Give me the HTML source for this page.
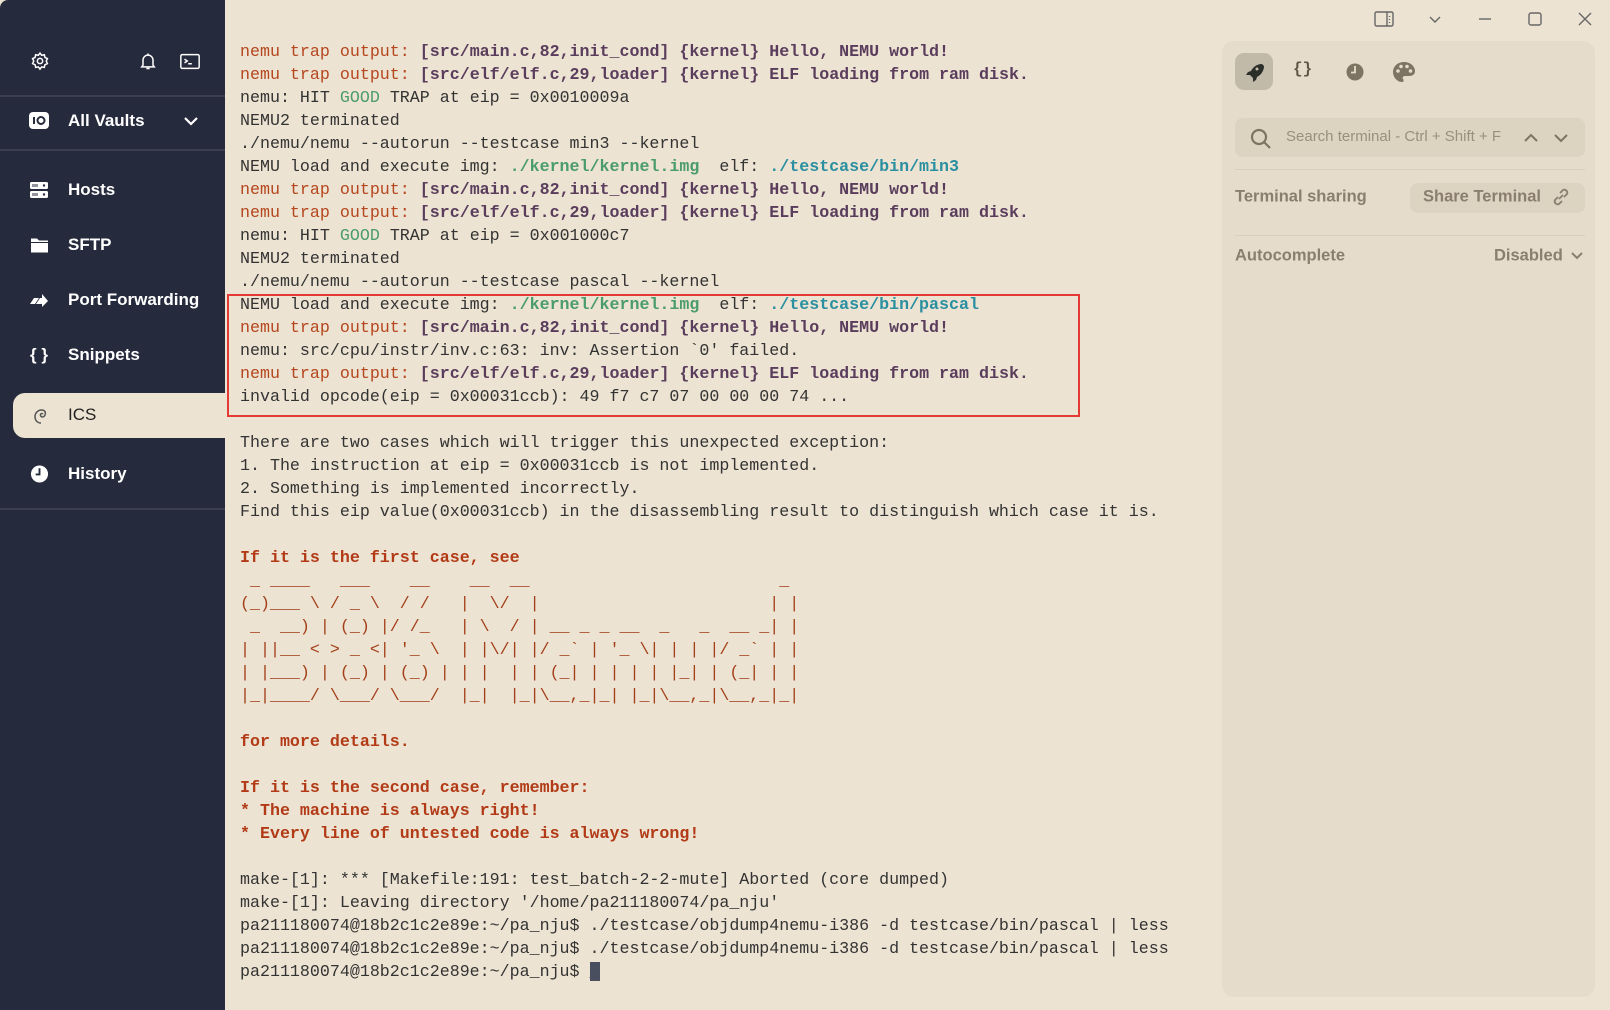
<!DOCTYPE html>
<html><head><meta charset="utf-8"><style>
*{margin:0;padding:0;box-sizing:border-box}
body{width:1610px;height:1010px;background:#ece3d2;position:relative;overflow:hidden;font-family:"Liberation Sans",sans-serif}
#side{position:absolute;left:0;top:0;width:225px;height:1010px;background:#262a3d;border-top-left-radius:8px}
.hr{position:absolute;left:0;width:225px;height:2px;background:#3a3e50}
.it{position:absolute;left:68px;color:#fff;font-size:17px;font-weight:bold;transform:translateY(-50%)}
.ic{position:absolute;left:29px;width:22px;height:22px;transform:translateY(-50%)}
#pill{position:absolute;left:13px;top:393px;width:215px;height:45px;background:#ece3d2;border-radius:12px 0 0 12px}
pre{position:absolute;left:240px;top:40px;font-family:"Liberation Mono",monospace;font-size:16.65px;line-height:23px;color:#333}
.o{color:#b5461e}.p{color:#5a3d5c;font-weight:bold}.g{color:#4b9c6d}.gb{color:#4b9c6d;font-weight:bold}.t{color:#2a8fa0;font-weight:bold}.r{color:#b23a16;font-weight:bold}.a{color:#a3401a}
#box{position:absolute;left:227px;top:294px;width:853px;height:123px;border:2px solid #e53935}
#panel{position:absolute;left:1222px;top:41px;width:373px;height:956px;background:#e6dccb;border-radius:12px}
.pt{position:absolute;color:#8a7f6f;font-size:16.5px;font-weight:bold;transform:translateY(-50%)}
.ln{position:absolute;left:13px;width:350px;height:1px;background:#d8cfbe}
.wc{position:absolute;top:9px;width:20px;height:20px}
</style></head><body>
<div id="side">
<svg class="ic" style="top:61px;left:30px;width:20px;height:20px" viewBox="0 0 24 24" fill="none" stroke="#fff" stroke-width="1.8"><circle cx="12" cy="12" r="3.2"/><path d="M12 2.5l2 2.6 3.2-.6.7 3.2 3 1.4-1.4 3 1.4 3-3 1.4-.7 3.2-3.2-.6-2 2.6-2-2.6-3.2.6-.7-3.2-3-1.4 1.4-3-1.4-3 3-1.4.7-3.2 3.2.6z"/></svg>
<svg class="ic" style="top:61px;left:138px;width:20px" viewBox="0 0 24 24" fill="none" stroke="#fff" stroke-width="1.8"><path d="M6 17V11a6 6 0 0112 0v6l1.5 2h-15zM10 21h4M12 3v2"/></svg>
<svg class="ic" style="top:61px;left:179px;width:22px" viewBox="0 0 24 24" fill="none" stroke="#fff" stroke-width="1.6"><rect x="2" y="5" width="20" height="15" rx="1.5"/><path d="M6 10l3 2-3 2M10 15h4"/></svg>
<div class="hr" style="top:95px"></div>
<svg class="ic" style="top:121px;left:27px;width:24px;height:24px" viewBox="0 0 24 24"><rect x="2" y="3" width="20" height="17" rx="4" fill="#fff"/><rect x="6" y="8" width="2" height="7" fill="#262a3d"/><circle cx="14" cy="11.5" r="3.5" fill="none" stroke="#262a3d" stroke-width="2"/></svg>
<div class="it" style="top:121px">All Vaults</div>
<svg style="position:absolute;left:183px;top:114px" width="16" height="14" viewBox="0 0 16 14" fill="none" stroke="#fff" stroke-width="2.2"><path d="M2 4l6 6 6-6"/></svg>
<div class="hr" style="top:149px"></div>
<svg class="ic" style="top:190px;left:30px;width:18px" viewBox="0 0 18 18"><rect x="0" y="1" width="18" height="7" rx="1.5" fill="#fff"/><rect x="0" y="10" width="18" height="7" rx="1.5" fill="#fff"/><path d="M3 3v3M5 3v3M7 3v3M3 12v3M5 12v3M7 12v3" stroke="#262a3d" stroke-width="1"/><circle cx="14" cy="4.5" r="1.2" fill="#262a3d"/><circle cx="14" cy="13.5" r="1.2" fill="#262a3d"/></svg>
<div class="it" style="top:190px">Hosts</div>
<svg class="ic" style="top:245px;left:31px;width:17px" viewBox="0 0 17 17"><path d="M0 2h6l2 2h9v12H0z" fill="#fff"/><path d="M0 6h17" stroke="#262a3d" stroke-width="1"/></svg>
<div class="it" style="top:245px">SFTP</div>
<svg class="ic" style="top:300px;left:30px;width:18px" viewBox="0 0 18 18"><path d="M0 13l4-6h5l-4 6zM6 13l4-6h2V3l6 7-6 6v-3z" fill="#fff"/></svg>
<div class="it" style="top:300px">Port Forwarding</div>
<div class="it" style="top:355px;left:30px;font-size:17px">{ }</div>
<div class="it" style="top:355px">Snippets</div>
<div class="hr" style="top:508px"></div>
<svg class="ic" style="top:474px;left:30px;width:19px;height:19px" viewBox="0 0 20 20"><circle cx="10" cy="10" r="9" fill="#fff"/><path d="M10 4v6.5H6" stroke="#262a3d" stroke-width="2" fill="none"/></svg>
<div class="it" style="top:474px">History</div>
</div>
<div id="pill"></div>
<svg style="position:absolute;left:32px;top:406px" width="18" height="20" viewBox="0 0 18 20" fill="none" stroke="#555" stroke-width="1.5"><path d="M9 17c-4 0-6-3-6-6.5S6 4 9.5 4 14 6.5 13 9s-4 2.5-4.5 0.5S10 7 11 8"/></svg>
<div class="it" style="top:415px;color:#222;font-weight:normal">ICS</div>
<pre><span class="o">nemu trap output:</span> <span class="p">[src/main.c,82,init_cond] {kernel} Hello, NEMU world!</span>
<span class="o">nemu trap output:</span> <span class="p">[src/elf/elf.c,29,loader] {kernel} ELF loading from ram disk.</span>
nemu: HIT <span class="g">GOOD</span> TRAP at eip = 0x0010009a
NEMU2 terminated
./nemu/nemu --autorun --testcase min3 --kernel
NEMU load and execute img: <span class="gb">./kernel/kernel.img</span>  elf: <span class="t">./testcase/bin/min3</span>
<span class="o">nemu trap output:</span> <span class="p">[src/main.c,82,init_cond] {kernel} Hello, NEMU world!</span>
<span class="o">nemu trap output:</span> <span class="p">[src/elf/elf.c,29,loader] {kernel} ELF loading from ram disk.</span>
nemu: HIT <span class="g">GOOD</span> TRAP at eip = 0x001000c7
NEMU2 terminated
./nemu/nemu --autorun --testcase pascal --kernel
NEMU load and execute img: <span class="gb">./kernel/kernel.img</span>  elf: <span class="t">./testcase/bin/pascal</span>
<span class="o">nemu trap output:</span> <span class="p">[src/main.c,82,init_cond] {kernel} Hello, NEMU world!</span>
nemu: src/cpu/instr/inv.c:63: inv: Assertion `0' failed.
<span class="o">nemu trap output:</span> <span class="p">[src/elf/elf.c,29,loader] {kernel} ELF loading from ram disk.</span>
invalid opcode(eip = 0x00031ccb): 49 f7 c7 07 00 00 00 74 ...

There are two cases which will trigger this unexpected exception:
1. The instruction at eip = 0x00031ccb is not implemented.
2. Something is implemented incorrectly.
Find this eip value(0x00031ccb) in the disassembling result to distinguish which case it is.

<span class="r">If it is the first case, see</span>
<span class="a"> _ ____   ___    __    __  __                         _ 
(_)___ \ / _ \  / /   |  \/  |                       | |
 _  __) | (_) |/ /_   | \  / | __ _ _ __  _   _  __ _| |
| ||__ &lt; &gt; _ &lt;| '_ \  | |\/| |/ _` | '_ \| | | |/ _` | |
| |___) | (_) | (_) | | |  | | (_| | | | | |_| | (_| | |
|_|____/ \___/ \___/  |_|  |_|\__,_|_| |_|\__,_|\__,_|_|</span>

<span class="r">for more details.</span>

<span class="r">If it is the second case, remember:
* The machine is always right!
* Every line of untested code is always wrong!</span>

make-[1]: *** [Makefile:191: test_batch-2-2-mute] Aborted (core dumped)
make-[1]: Leaving directory '/home/pa211180074/pa_nju'
pa211180074@18b2c1c2e89e:~/pa_nju$ ./testcase/objdump4nemu-i386 -d testcase/bin/pascal | less
pa211180074@18b2c1c2e89e:~/pa_nju$ ./testcase/objdump4nemu-i386 -d testcase/bin/pascal | less
pa211180074@18b2c1c2e89e:~/pa_nju$ <span style="background:#4a4f60;color:#4a4f60">_</span></pre>
<div id="box"></div>
<svg class="wc" style="left:1374px" viewBox="0 0 20 20" fill="none" stroke="#666" stroke-width="1.4"><rect x="1" y="3" width="18" height="14" rx="1.5"/><path d="M13 3v14"/><path d="M15.5 7v1M15.5 10v1M15.5 13v1"/></svg>
<svg class="wc" style="left:1425px" viewBox="0 0 20 20" fill="none" stroke="#666" stroke-width="1.4"><path d="M5 8l5 5 5-5"/></svg>
<svg class="wc" style="left:1475px" viewBox="0 0 20 20" fill="none" stroke="#666" stroke-width="1.4"><path d="M4 10h12"/></svg>
<svg class="wc" style="left:1525px" viewBox="0 0 20 20" fill="none" stroke="#666" stroke-width="1.4"><rect x="4" y="4" width="12" height="12" rx="2"/></svg>
<svg class="wc" style="left:1575px" viewBox="0 0 20 20" fill="none" stroke="#666" stroke-width="1.4"><path d="M4 4l12 12M16 4L4 16"/></svg>
<div id="panel">
<div style="position:absolute;left:13px;top:12px;width:38px;height:37px;background:#c2baa9;border-radius:9px"></div>
<svg style="position:absolute;left:22px;top:21px" width="20" height="20" viewBox="0 0 20 20"><path d="M18 2c-5 0-9 3-11 7l-3 1-2 3 4 0 3 3 0 4 3-2 1-3c4-2 7-6 7-11z" fill="#2b2f2a"/><circle cx="13" cy="7" r="1.5" fill="#c2baa9"/></svg>
<div style="position:absolute;left:71px;top:19px;color:#5f5648;font-family:'Liberation Mono',monospace;font-weight:bold;font-size:16px">{}</div>
<svg style="position:absolute;left:123px;top:21px" width="20" height="20" viewBox="0 0 20 20"><circle cx="10" cy="10" r="8.5" fill="#7e7462"/><path d="M10 4v6.5H6" stroke="#e6dccb" stroke-width="1.8" fill="none"/></svg>
<svg style="position:absolute;left:170px;top:20px" width="24" height="22" viewBox="0 0 24 22"><path d="M12 1C5 1 1 6 1 11s4 10 9 10c2 0 2-2 1-3s0-3 2-3h4c4 0 6-2 6-5C23 5 18 1 12 1z" fill="#7e7462"/><circle cx="6" cy="10" r="1.8" fill="#e6dccb"/><circle cx="9" cy="5.5" r="1.8" fill="#e6dccb"/><circle cx="15" cy="5.5" r="1.8" fill="#e6dccb"/><circle cx="18.5" cy="10" r="1.8" fill="#e6dccb"/></svg>
<div style="position:absolute;left:13px;top:77px;width:350px;height:39px;background:#ddd3c1;border-radius:8px"></div>
<svg style="position:absolute;left:27px;top:86px" width="24" height="24" viewBox="0 0 24 24" fill="none" stroke="#7e7462" stroke-width="2.2"><circle cx="10" cy="10" r="7"/><path d="M15 15l6 6"/></svg>
<div style="position:absolute;left:64px;top:87px;color:#9a8f7d;font-size:15px">Search terminal - Ctrl + Shift + F</div>
<svg style="position:absolute;left:301px;top:90px" width="16" height="14" viewBox="0 0 16 14" fill="none" stroke="#7e7462" stroke-width="2"><path d="M2 10l6-6 6 6"/></svg>
<svg style="position:absolute;left:331px;top:90px" width="16" height="14" viewBox="0 0 16 14" fill="none" stroke="#7e7462" stroke-width="2"><path d="M2 4l6 6 6-6"/></svg>
<div class="ln" style="top:128px"></div>
<div class="pt" style="left:13px;top:156px">Terminal sharing</div>
<div style="position:absolute;left:188px;top:142px;width:175px;height:30px;background:#ddd3c1;border-radius:8px"></div>
<div class="pt" style="left:201px;top:156px">Share Terminal</div>
<svg style="position:absolute;left:330px;top:146px" width="18" height="20" viewBox="0 0 18 20" fill="none" stroke="#8a7f6f" stroke-width="1.8"><path d="M8 6l3-3a3 3 0 014 4l-3 3M10 14l-3 3a3 3 0 01-4-4l3-3M7 12l4-4"/></svg>
<div class="ln" style="top:194px"></div>
<div class="pt" style="left:13px;top:215px">Autocomplete</div>
<div class="pt" style="left:272px;top:215px">Disabled</div>
<svg style="position:absolute;left:348px;top:209px" width="14" height="12" viewBox="0 0 14 12" fill="none" stroke="#8a7f6f" stroke-width="2"><path d="M2 3l5 5 5-5"/></svg>
</div>
</body></html>
